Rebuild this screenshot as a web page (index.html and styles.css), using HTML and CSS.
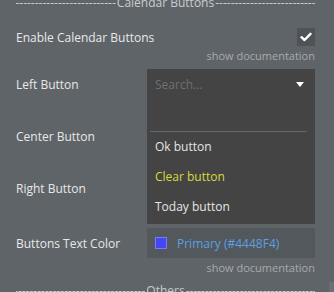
FILE: index.html
```html
<!DOCTYPE html>
<html lang="en">
<head>
    <meta charset="UTF-8">
    <meta name="viewport" content="width=device-width, initial-scale=1.0">
    <title>Calendar Buttons</title>
    <link rel="stylesheet" href="styles.css">
</head>
<body>
    <div class="panel">
        <div class="section-title">
            <span class="dashes">--------------------------------------------------</span>
            <span class="section-name">Calendar Buttons</span>
            <span class="dashes">--------------------------------------------------</span>
        </div>

        <div class="field field-check">
            <div class="field-row">
                <label class="field-label">Enable Calendar Buttons</label>
                <span class="checkbox">
                    <svg width="12" height="10" viewBox="0 0 12 10"><path d="M1.5 5.2 L4.5 8 L10.5 1.8" fill="none" stroke="#fff" stroke-width="2.4" stroke-linecap="round" stroke-linejoin="round"/></svg>
                </span>
            </div>
            <a href="#" class="doc-link">show documentation</a>
        </div>

        <div class="field field-left">
            <div class="field-row">
                <label class="field-label">Left Button</label>
                <div class="control">
                    <div class="dropdown">
                        <div class="dropdown-search">
                            <span class="placeholder">Search...</span>
                            <span class="caret"></span>
                        </div>
                        <div class="dropdown-empty"></div>
                        <div class="dropdown-sep"></div>
                        <div class="dropdown-item">Ok button</div>
                        <div class="dropdown-item selected">Clear button</div>
                        <div class="dropdown-item">Today button</div>
                    </div>
                </div>
            </div>
        </div>

        <div class="field field-center">
            <div class="field-row">
                <label class="field-label">Center Button</label>
                <div class="control select-box"></div>
            </div>
        </div>

        <div class="field field-right">
            <div class="field-row">
                <label class="field-label">Right Button</label>
                <div class="control select-box"></div>
            </div>
        </div>

        <div class="field field-color">
            <div class="field-row">
                <label class="field-label">Buttons Text Color</label>
                <div class="control color-box">
                    <span class="swatch"></span>
                    <span class="color-name">Primary (#4448F4)</span>
                </div>
            </div>
            <a href="#" class="doc-link">show documentation</a>
        </div>

        <div class="section-title section-others">
            <span class="dashes">--------------------------------------------------</span>
            <span class="section-name">Others</span>
            <span class="dashes">--------------------------------------------------</span>
        </div>
    </div>
    <div class="scroll-thumb"></div>
</body>
</html>
```

FILE: styles.css
```css
/* --- base --- */
:root {
    --bg: #5f6469;
    --dark: #444444;
    --text: #e8e8e8;
    --muted: #a6aaae;
    --font-family: "Open Sans", "Noto Sans", Arial, sans-serif;
}

html, body {
    margin: 0;
    height: 100%;
    overflow: hidden;
}

body {
    background-color: var(--bg);
    font-family: var(--font-family);
    font-size: 12px;
    color: var(--text);
}

.panel {
    padding: 0 19px 0 16px;
}

/* --- section titles --- */
.section-title {
    display: flex;
    align-items: center;
    line-height: 14px;
    height: 14px;
    margin-top: -4px;
    color: #c9cccf;
    white-space: nowrap;
}
.section-title .dashes {
    flex: 1;
    min-width: 0;
    overflow: hidden;
}
.section-title .dashes:first-child {
    direction: rtl;
}
.section-name {
    padding: 0 1px;
}
.section-others {
    margin-top: 9px;
}

/* --- fields --- */
.field-row {
    display: flex;
    align-items: center;
    justify-content: space-between;
    height: 30px;
}
.field-label {
    color: var(--text);
}
.control {
    width: 168px;
    height: 30px;
    position: relative;
}
.doc-link {
    display: block;
    margin-top: 3px;
    text-align: right;
    line-height: 14px;
    font-size: 11px;
    color: var(--muted);
    text-decoration: none;
}

.field-check {
    margin-top: 18px;
}
.field-check .field-row {
    height: 18px;
}
.checkbox {
    width: 18px;
    height: 18px;
    background: #4f5358;
    display: flex;
    align-items: center;
    justify-content: center;
}

.field-left { margin-top: 6px; }
.field-center { margin-top: 22px; }
.field-right { margin-top: 22px; }
.field-color { margin-top: 25px; }

.select-box {
    background: var(--dark);
}

/* --- dropdown (opened) --- */
.dropdown {
    position: absolute;
    top: 0;
    left: 0;
    width: 168px;
    height: 155px;
    background: var(--dark);
    z-index: 5;
}
.dropdown-search {
    height: 30px;
    display: flex;
    align-items: center;
    justify-content: space-between;
    padding: 0 11px 0 8px;
}
.placeholder {
    color: #6f7073;
}
.caret {
    width: 0;
    height: 0;
    border-left: 4px solid transparent;
    border-right: 4px solid transparent;
    border-top: 5px solid #fff;
    margin-top: 1px;
}
.dropdown-empty {
    height: 32px;
}
.dropdown-sep {
    height: 1px;
    background: #65686b;
    margin: 0 8px 0 3px;
}
.dropdown-item {
    height: 30px;
    line-height: 30px;
    padding-left: 8px;
    color: #e4e4e4;
}
.dropdown-item.selected {
    color: #dada3c;
}

/* --- color picker --- */
.color-box {
    background: #53585d;
    display: flex;
    align-items: center;
    padding-left: 8px;
    box-sizing: border-box;
}
.swatch {
    width: 10px;
    height: 10px;
    background: #4448f4;
    border: 1px solid #7a7cf0;
    margin-right: 10px;
}
.color-name {
    color: #5d9fe2;
}

.scroll-thumb {
    position: fixed;
    right: 0;
    bottom: 0;
    width: 5px;
    height: 10px;
    background: #6b7075;
}
```
